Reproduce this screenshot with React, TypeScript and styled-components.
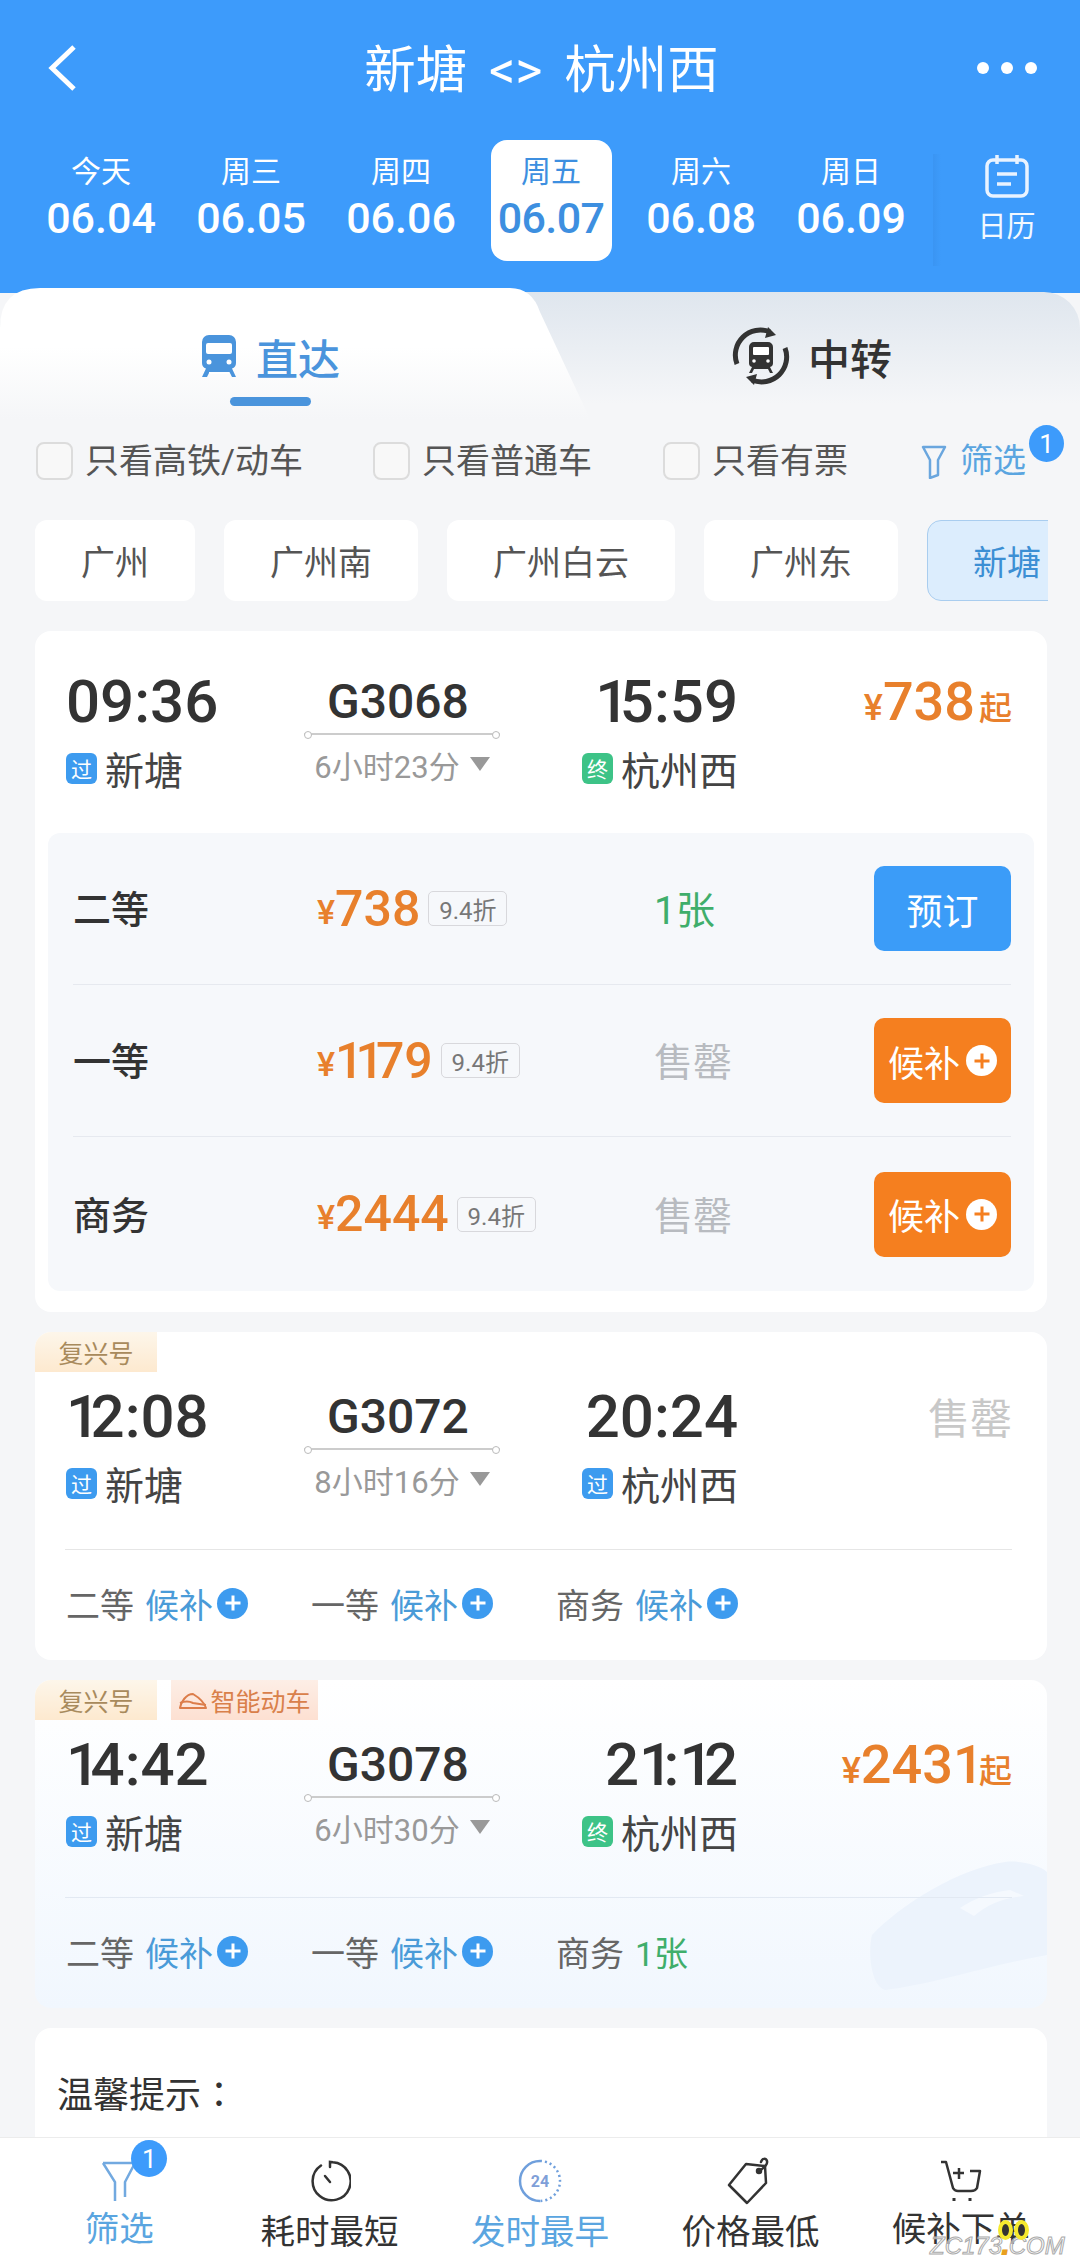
import styled, { createGlobalStyle } from 'styled-components';

const dates = [
   { day: '今天', date: '06.04' },
   { day: '周三', date: '06.05' },
   { day: '周四', date: '06.06' },
   { day: '周五', date: '06.07', active: true },
   { day: '周六', date: '06.08' },
   { day: '周日', date: '06.09' },
];

const stations = ['广州', '广州南', '广州白云', '广州东'];

const fares = [
   { name: '二等', price: '738', status: '1张', action: 'book' },
   { name: '一等', price: '1179', status: '售罄', action: 'wait' },
   { name: '商务', price: '2444', status: '售罄', action: 'wait' },
];

const TrainFront = () => (
   <svg width="38" height="44" viewBox="0 0 38 44" fill="#4a94dc">
      <path d="M9 1h20a7 7 0 0 1 7 7v21a6 6 0 0 1-4 5.600L36 43h-4l-2.500-5h-20L7 43H2l4-8.400A6 6 0 0 1 2 29V8a7 7 0 0 1 7-7Z" />
      <rect x="6" y="9" width="26" height="11" rx="2" fill="#fff" />
      <circle cx="9" cy="28" r="2.500" fill="#fff" />
      <circle cx="29" cy="28" r="2.500" fill="#fff" />
      <rect x="9" y="38" width="20" height="2" fill="#fff" />
   </svg>
);

const TransferIcon = () => (
   <svg width="58" height="58" viewBox="0 0 58 58" fill="none">
      <path d="M5 37A25 25 0 0 1 38 5" stroke="#333" strokeWidth="5" />
      <path d="M53 21a25 25 0 0 1-33 32" stroke="#333" strokeWidth="5" />
      <path d="M36 0l8 8-11 3ZM22 58l-8-8 11-3Z" fill="#333" />
      <path d="M22 15h14a5 5 0 0 1 5 5v16a4 4 0 0 1-3 4l3 6h-3l-2-4H22l-2 4h-3l3-6a4 4 0 0 1-3-4V20a5 5 0 0 1 5-5Z" fill="#333" />
      <rect x="21" y="20" width="16" height="8" rx="1" fill="#fff" />
      <circle cx="22" cy="34" r="1.800" fill="#fff" />
      <circle cx="36" cy="34" r="1.800" fill="#fff" />
   </svg>
);

const FunnelSmall = () => (
   <svg width="26" height="36" viewBox="0 0 26 36" fill="none" stroke="#6aa6de" strokeWidth="2.500">
      <path d="M2 4h22l-7 13v15l-8 3V17Z" strokeLinejoin="round" />
   </svg>
);

const SmartTrain = () => (
   <svg width="30" height="20" viewBox="0 0 30 20" fill="none" stroke="#dc7d4a" strokeWidth="2">
      <path d="M2 18c1-6 6-14 13-14 5 3 11 8 13 14Z" strokeLinejoin="round" />
      <path d="M2 13c5-2 9-2 13 0l13 2" />
   </svg>
);

const FunnelTab = () => (
   <svg width="36" height="42" viewBox="0 0 36 42" fill="none" stroke="#72a9e0" strokeWidth="2.500">
      <path d="M2 3h32" />
      <path d="M2 3l12 19v19M34 3L24 22v15" />
   </svg>
);

const ClockTab = () => (
   <svg width="42" height="42" viewBox="0 0 42 42" fill="none" stroke="#333" strokeWidth="2.500">
      <path d="M12 5.500A19 19 0 1 0 24 2.300L21 2v5" strokeLinecap="round" />
      <path d="M16 16l5 6" strokeLinecap="round" />
   </svg>
);

const EarlyTab = () => (
   <svg width="44" height="44" viewBox="0 0 44 44" fill="none">
      <path d="M22 2a20 20 0 0 0 0 40" stroke="#6f9fdc" strokeWidth="2.500" />
      <path d="M22 2a20 20 0 0 1 0 40" stroke="#6f9fdc" strokeWidth="2.500" strokeDasharray="2 3" />
      <text x="22" y="28" textAnchor="middle" fontSize="16" fontWeight="700" fontFamily="Roboto, sans-serif" fill="#7f9fd8">
         24
      </text>
   </svg>
);

const TagTab = () => (
   <svg width="48" height="48" viewBox="0 0 48 48" fill="none" stroke="#333" strokeWidth="2.500" strokeLinejoin="round">
      <path d="M20 7l19 2 1 17-19 20L3 28Z" />
      <circle cx="33" cy="14" r="2" />
      <path d="M33 14c5-3 9-6 8-10-1-3-5-3-6 1" strokeLinecap="round" />
   </svg>
);

const CartTab = () => (
   <svg width="44" height="42" viewBox="0 0 44 42" fill="none" stroke="#333" strokeWidth="2.500">
      <path d="M2 2h5l7 26c1 2 2 3 5 3h13c3 0 5-1 6-3l3-17H31" strokeLinejoin="round" />
      <path d="M20 8v11M14 13h11" />
      <path d="M15 38v3M31 38v3" strokeWidth="3" />
   </svg>
);

const Watermark = () => (
   <svg width="177" height="130" viewBox="0 0 177 130" fill="#ecf3fc">
      <path d="M2 75C30 45 90 8 135 2c15-2 35 3 42 10v83c-57 10-117 30-162 35C0 125-2 90 2 75Z" />
      <path d="M90 48c15-10 32-16 50-18l14 6c-20 2-36 8-50 20Z" fill="#f5f9fe" />
   </svg>
);

// the screenshot's digits are proportional, so a 1 takes less room than the others
const Num = ({ v }: { v: string }) => (
   <>{v.split('').map((c, i) => (c === '1' ? <One key={i}>1</One> : c))}</>
);

const Summary = ({ from, fromType, to, toType, code, duration, depart, arrive, right }: any) => (
   <TopGrid>
      <Column>
         <Time>
            <Num v={depart} />
         </Time>
         <StationLine>
            <StopBadge $end={fromType === '终'}>{fromType}</StopBadge>
            {from}
         </StationLine>
      </Column>
      <MiddleColumn>
         <TrainCode>{code}</TrainCode>
         <TrackLine />
         <Duration>
            {duration}
            <Caret />
         </Duration>
      </MiddleColumn>
      <ArriveColumn>
         <Time>
            <Num v={arrive} />
         </Time>
         <StationLine>
            <StopBadge $end={toType === '终'}>{toType}</StopBadge>
            {to}
         </StationLine>
      </ArriveColumn>
      <PriceColumn>{right}</PriceColumn>
   </TopGrid>
);

const FromPrice = ({ value }: { value: string }) => (
   <PriceLine>
      <Yen>¥</Yen>
      <BigPrice>
         <Num v={value} />
      </BigPrice>
      <Qi>起</Qi>
   </PriceLine>
);

const App = () => (
   <Page>
      <GlobalStyle />
      <Header>
         <TitleBar>
            <svg width="32" height="46" viewBox="0 0 32 46" fill="none" stroke="#fff" strokeWidth="5">
               <path d="M28 2L6 23l22 21" />
            </svg>
            <Title>
               新塘 <TitleArrow>&lt;&gt;</TitleArrow> 杭州西
            </Title>
            <Dots>
               <i />
               <i />
               <i />
            </Dots>
         </TitleBar>
         <DateRow>
            <DateList>
               {dates.map((d) => (
                  <DateItem key={d.date} $active={d.active}>
                     <WeekDay>{d.day}</WeekDay>
                     <DayNumber $active={d.active}>{d.date}</DayNumber>
                  </DateItem>
               ))}
            </DateList>
            <CalendarButton>
               <svg width="46" height="44" viewBox="0 0 46 44" fill="none" stroke="#e9f3ff" strokeWidth="3.500">
                  <rect x="3" y="6" width="40" height="36" rx="6" />
                  <path d="M13 1v9M33 1v9M13 20h20M13 30h14" />
               </svg>
               <CalendarLabel>日历</CalendarLabel>
            </CalendarButton>
         </DateRow>
      </Header>

      <TabBar>
         <DirectTab>
            <TabLabel $active>
               <TrainFront />
               直达
            </TabLabel>
            <TabMark />
         </DirectTab>
         <TransferTab>
            <TabLabel>
               <TransferIcon />
               中转
            </TabLabel>
         </TransferTab>
      </TabBar>

      <FilterRow>
         <CheckItem>
            <CheckBox />
            只看高铁/动车
         </CheckItem>
         <CheckItem>
            <CheckBox />
            只看普通车
         </CheckItem>
         <CheckItem>
            <CheckBox />
            只看有票
         </CheckItem>
         <FilterLink>
            <FunnelSmall />
            筛选
            <CountBadge>1</CountBadge>
         </FilterLink>
      </FilterRow>

      <StationRow>
         {stations.map((s) => (
            <StationChip key={s}>{s}</StationChip>
         ))}
         <ActiveChip>新塘</ActiveChip>
      </StationRow>

      <CardList>
         <Card $plain>
            <Summary
               depart="09:36"
               arrive="15:59"
               code="G3068"
               duration="6小时23分"
               from="新塘"
               fromType="过"
               to="杭州西"
               toType="终"
               right={<FromPrice value="738" />}
            />
            <FarePanel>
               {fares.map((f) => (
                  <FareRow key={f.name}>
                     <FareName>{f.name}</FareName>
                     <FarePrice>
                        <FareYen>¥</FareYen>
                        <FareValue>
                           <Num v={f.price} />
                        </FareValue>
                        <Discount>9.4折</Discount>
                     </FarePrice>
                     <FareStatus $available={f.action === 'book'}>{f.status}</FareStatus>
                     <ActionButton $wait={f.action === 'wait'}>
                        {f.action === 'book' ? (
                           '预订'
                        ) : (
                           <>
                              候补
                              <PlusDot $inverse />
                           </>
                        )}
                     </ActionButton>
                  </FareRow>
               ))}
            </FarePanel>
         </Card>

         <Card>
            <TagRow>
               <BrandTag>复兴号</BrandTag>
            </TagRow>
            <Summary
               depart="12:08"
               arrive="20:24"
               code="G3072"
               duration="8小时16分"
               from="新塘"
               fromType="过"
               to="杭州西"
               toType="过"
               right={<SoldOut>售罄</SoldOut>}
            />
            <SeatRow>
               <SeatItem>
                  二等<WaitText>候补</WaitText>
                  <PlusDot />
               </SeatItem>
               <SeatItem>
                  一等<WaitText>候补</WaitText>
                  <PlusDot />
               </SeatItem>
               <SeatItem>
                  商务<WaitText>候补</WaitText>
                  <PlusDot />
               </SeatItem>
            </SeatRow>
         </Card>

         <Card $tinted>
            <TrainMark>
               <Watermark />
            </TrainMark>
            <TagRow>
               <BrandTag>复兴号</BrandTag>
               <SmartTag>
                  <SmartTrain />
                  智能动车
               </SmartTag>
            </TagRow>
            <Summary
               depart="14:42"
               arrive="21:12"
               code="G3078"
               duration="6小时30分"
               from="新塘"
               fromType="过"
               to="杭州西"
               toType="终"
               right={<FromPrice value="2431" />}
            />
            <SeatRow $tinted>
               <SeatItem>
                  二等<WaitText>候补</WaitText>
                  <PlusDot />
               </SeatItem>
               <SeatItem>
                  一等<WaitText>候补</WaitText>
                  <PlusDot />
               </SeatItem>
               <SeatItem>
                  商务<LeftText>1张</LeftText>
               </SeatItem>
            </SeatRow>
         </Card>

         <NoticeCard>
            温馨提示<NoticeColon>：</NoticeColon>
         </NoticeCard>
      </CardList>

      <BottomBar>
         <BottomTab $active $lift>
            <IconSlot>
               <FunnelTab />
               <BottomBadge>1</BottomBadge>
            </IconSlot>
            筛选
         </BottomTab>
         <BottomTab>
            <IconSlot>
               <ClockTab />
            </IconSlot>
            耗时最短
         </BottomTab>
         <BottomTab $active>
            <IconSlot>
               <EarlyTab />
            </IconSlot>
            发时最早
         </BottomTab>
         <BottomTab>
            <IconSlot>
               <TagTab />
            </IconSlot>
            价格最低
         </BottomTab>
         <BottomTab $lift>
            <IconSlot>
               <CartTab />
            </IconSlot>
            候补下单
         </BottomTab>
      </BottomBar>
      <SiteMark>
         <Eyes>
            <i />
            <i />
         </Eyes>
         ZC173<b>.</b>COM
      </SiteMark>
   </Page>
);

export default App;

const GlobalStyle = createGlobalStyle`
   html, body {
      margin: 0;
      padding: 0;
      background: #f5f6f8;
   }
   * {
      box-sizing: border-box;
   }
`;

const Page = styled.div`
   position: relative;
   width: 1080px;
   height: 2268px;
   overflow: hidden;
   background: #f5f6f8;
   font-family: Roboto, 'Noto Sans CJK SC', sans-serif;
   color: #333;
`;

const One = styled.span`
   letter-spacing: -0.16em;
`;

const Header = styled.div`
   height: 293px;
   background: #3d9bfb;
   color: #fff;
`;

const TitleBar = styled.div`
   display: grid;
   grid-template-columns: 1fr auto 1fr;
   align-items: center;
   height: 136px;
   padding: 0 43px 0 46px;
`;

const Title = styled.div`
   margin-top: -6px;
   font-size: 51.500px;
`;

const TitleArrow = styled.span`
   margin: 0 9px;
   font-size: 52px;
`;

const Dots = styled.div`
   display: flex;
   gap: 12px;
   justify-self: end;

   i {
      width: 12px;
      height: 12px;
      border-radius: 50%;
      background: #fff;
   }
`;

const DateRow = styled.div`
   display: flex;
   margin-top: 4px;
   padding-left: 26px;
`;

const DateList = styled.div`
   display: grid;
   grid-template-columns: repeat(6, 150px);
   width: 907px;
   justify-items: center;
`;

const DateItem = styled.div<{ $active?: boolean }>`
   display: flex;
   flex-direction: column;
   align-items: center;
   width: 121px;
   height: 121px;
   padding-top: 12px;
   border-radius: 16px;
   background: ${({ $active }) => ($active ? '#fff' : 'transparent')};
   color: ${({ $active }) => ($active ? '#3d8fe0' : '#fff')};
`;

const WeekDay = styled.div`
   font-size: 30px;
   line-height: 40px;
`;

const DayNumber = styled.div<{ $active?: boolean }>`
   font-size: 43px;
   line-height: 52px;
   font-weight: 500;
   letter-spacing: ${({ $active }) => ($active ? '-0.6px' : '0')};
`;

const CalendarButton = styled.div`
   display: flex;
   flex-direction: column;
   align-items: center;
   width: 147px;
   height: 112px;
   margin-top: 14px;
   background: linear-gradient(90deg, rgba(40, 110, 190, 0.14), rgba(40, 110, 190, 0) 8px);
   color: #f2f8ff;
`;

const CalendarLabel = styled.div`
   font-size: 29px;
   line-height: 40px;
   margin-top: 9px;
`;

const TabBar = styled.div`
   display: grid;
   grid-template-columns: 590px 1fr;
   height: 127px;
   margin-top: -1px;
   border-radius: 36px 36px 0 0;
   background: linear-gradient(#dfe6ee, #f5f6f8 88%);
`;

const DirectTab = styled.div`
   display: flex;
   flex-direction: column;
   align-items: center;
   height: 131px;
   margin-top: -4px;
   padding: 46px 50px 0 0;
   background: linear-gradient(#fff 45%, #f5f6f8);
   clip-path: path('M0 131 V40 Q0 0 40 0 H510 Q532 0 540 24 L590 131 Z');
`;

const TransferTab = styled.div`
   display: flex;
   justify-content: center;
   padding: 42px 46px 0 0;
`;

const TabLabel = styled.div<{ $active?: boolean }>`
   display: flex;
   align-items: center;
   gap: 18px;
   height: 44px;
   font-size: 42px;
   font-weight: 500;
   color: ${({ $active }) => ($active ? '#4a94dc' : '#333')};
`;

const TabMark = styled.div`
   width: 81px;
   height: 9px;
   margin-top: 19px;
   border-radius: 5px;
   background: #4a94dc;
`;

const FilterRow = styled.div`
   display: grid;
   grid-template-columns: 337px 290px 258px 1fr;
   height: 38px;
   margin-top: 23px;
   padding-left: 36px;
`;

const CheckItem = styled.div`
   display: flex;
   align-items: center;
   gap: 12px;
   font-size: 34px;
   line-height: 38px;
   color: #555;
`;

const CheckBox = styled.span`
   width: 37px;
   height: 38px;
   border: 2px solid #dcdcdc;
   border-radius: 8px;
   background: #f8f8f8;
`;

const FilterLink = styled.div`
   position: relative;
   display: flex;
   align-items: center;
   gap: 13px;
   font-size: 33px;
   line-height: 38px;
   color: #5aa5e0;
`;

const CountBadge = styled.span`
   position: absolute;
   left: 108px;
   top: -17px;
   display: flex;
   align-items: center;
   justify-content: center;
   width: 35px;
   height: 37px;
   border-radius: 50%;
   background: #3d9bfb;
   color: #fff;
   font-size: 26px;
`;

const StationRow = styled.div`
   display: flex;
   gap: 29px;
   width: 1048px;
   height: 81px;
   margin-top: 40px;
   padding-left: 35px;
   overflow: hidden;
`;

const StationChip = styled.div`
   display: flex;
   flex: none;
   align-items: center;
   justify-content: center;
   padding: 0 46px;
   border-radius: 12px;
   background: #fff;
   font-size: 34px;
   white-space: nowrap;
   color: #555;
`;

const ActiveChip = styled.div`
   display: flex;
   align-items: center;
   flex: none;
   width: 140px;
   padding-left: 45px;
   border: 1px solid #a9cdef;
   border-radius: 14px;
   background: #dcedfd;
   font-size: 34px;
   white-space: nowrap;
   color: #3c8fd4;
`;

const CardList = styled.div`
   display: flex;
   flex-direction: column;
   gap: 20px;
   margin-top: 30px;
   padding: 0 33px 0 35px;
`;

const Card = styled.div<{ $plain?: boolean; $tinted?: boolean }>`
   position: relative;
   overflow: hidden;
   padding-top: ${({ $plain }) => ($plain ? '41px' : '0')};
   padding-bottom: ${({ $plain }) => ($plain ? '21px' : '0')};
   border-radius: 16px;
   background: ${({ $tinted }) => ($tinted ? 'linear-gradient(#fff, #f1f7fe)' : '#fff')};
`;

const TrainMark = styled.div`
   position: absolute;
   right: 0;
   bottom: 18px;
   line-height: 0;
`;

const TagRow = styled.div`
   display: flex;
   gap: 14px;
   height: 40px;
   margin-bottom: 15px;
`;

const BrandTag = styled.div`
   display: flex;
   align-items: center;
   justify-content: center;
   width: 122px;
   background: linear-gradient(#fdf6ea, #fde9cf);
   font-size: 25px;
   color: #a88a5c;
`;

const SmartTag = styled.div`
   display: flex;
   align-items: center;
   justify-content: center;
   gap: 2px;
   width: 147px;
   background: linear-gradient(#fdeee6, #fde0d2);
   font-size: 25px;
   color: #d9804a;
`;

const TopGrid = styled.div`
   position: relative;
   display: grid;
   grid-template-columns: 238px 196px 238px 1fr;
   padding: 0 35px 0 31px;
`;

const Column = styled.div`
   display: flex;
   flex-direction: column;
`;

const ArriveColumn = styled(Column)`
   align-items: flex-end;
`;

const MiddleColumn = styled(Column)`
   align-items: center;
`;

const PriceColumn = styled(Column)`
   align-items: flex-end;
`;

const Time = styled.div`
   font-size: 60px;
   line-height: 60px;
   font-weight: 500;
   color: #333;
`;

const StationLine = styled.div`
   display: flex;
   align-items: center;
   gap: 8px;
   height: 48px;
   margin-top: 12px;
   font-size: 39px;
   color: #444;
`;

const StopBadge = styled.span<{ $end?: boolean }>`
   display: flex;
   align-items: center;
   justify-content: center;
   width: 31px;
   height: 31px;
   border-radius: 6px;
   background: ${({ $end }) => ($end ? '#3dc387' : '#3d9bef')};
   color: #fff;
   font-size: 21px;
`;

const TrainCode = styled.div`
   margin-right: 8px;
   font-size: 48px;
   line-height: 60px;
   font-weight: 500;
   color: #333;
`;

const TrackLine = styled.div`
   position: relative;
   width: 196px;
   height: 2px;
   margin-top: 1px;
   background: #ccc;

   &::before,
   &::after {
      content: '';
      position: absolute;
      top: -2px;
      width: 6px;
      height: 6px;
      border: 1px solid #bbb;
      border-radius: 50%;
      background: #fff;
   }

   &::before {
      left: 0;
   }

   &::after {
      right: 0;
   }
`;

const Duration = styled.div`
   display: flex;
   align-items: center;
   gap: 10px;
   height: 40px;
   margin-top: 9px;
   font-size: 31px;
   color: #999;
`;

const Caret = styled.span`
   border-left: 10px solid transparent;
   border-right: 10px solid transparent;
   border-top: 14px solid #999;
`;

const PriceLine = styled.div`
   display: flex;
   align-items: baseline;
   height: 60px;
   line-height: 60px;
   color: #e8802c;
`;

const Yen = styled.span`
   font-size: 36px;
   font-weight: 500;
`;

const BigPrice = styled.span`
   font-size: 54px;
   font-weight: 500;
`;

const Qi = styled.span`
   margin-left: 4px;
   font-size: 33px;
   font-weight: 500;
`;

const SoldOut = styled.div`
   font-size: 42px;
   line-height: 66px;
   color: #c8c8c8;
`;

const FarePanel = styled.div`
   margin: 41px 13px 0;
   padding: 0 23px 0 25px;
   border-radius: 12px;
   background: #f6f8fb;
`;

const FareRow = styled.div`
   display: grid;
   grid-template-columns: 244px 337px 220px 137px;
   align-items: center;
   height: 152px;
   border-bottom: 1px solid #e6e9ef;

   &:last-child {
      height: 154px;
      border-bottom: none;
   }
`;

const FareName = styled.div`
   margin-top: -4px;
   font-size: 38px;
   font-weight: 500;
   color: #333;
`;

const FarePrice = styled.div`
   display: flex;
   align-items: center;
   color: #e8802c;
`;

const FareYen = styled.span`
   margin-top: 6px;
   font-size: 34px;
   font-weight: 500;
`;

const FareValue = styled.span`
   font-size: 50px;
   font-weight: 500;
`;

const Discount = styled.span`
   display: flex;
   align-items: center;
   justify-content: center;
   width: 79px;
   height: 35px;
   margin-left: 8px;
   border: 1px solid #d8d8dc;
   border-radius: 5px;
   font-size: 24px;
   color: #777;
`;

const FareStatus = styled.div<{ $available?: boolean }>`
   margin-top: -3px;
   font-size: 39px;
   color: ${({ $available }) => ($available ? '#3fae6b' : '#b8bbc0')};
`;

const ActionButton = styled.div<{ $wait?: boolean }>`
   display: flex;
   align-items: center;
   justify-content: center;
   gap: 6px;
   height: 85px;
   border-radius: 10px;
   background: ${({ $wait }) => ($wait ? '#f57f1f' : '#3b9cf8')};
   color: #fff;
   font-size: 36px;
`;

const PlusDot = styled.span<{ $inverse?: boolean }>`
   position: relative;
   flex: none;
   width: 31px;
   height: 31px;
   border-radius: 50%;
   background: ${({ $inverse }) => ($inverse ? '#fff' : '#3d9bef')};

   &::before,
   &::after {
      content: '';
      position: absolute;
      left: 50%;
      top: 50%;
      background: ${({ $inverse }) => ($inverse ? '#f57f1f' : '#fff')};
      transform: translate(-50%, -50%);
   }

   &::before {
      width: 15px;
      height: 3px;
   }

   &::after {
      width: 3px;
      height: 15px;
   }
`;

const SeatRow = styled.div<{ $tinted?: boolean }>`
   position: relative;
   display: grid;
   grid-template-columns: repeat(3, 245px);
   align-items: center;
   height: 111px;
   margin: 42px 35px 0 30px;
   padding-left: 1px;
   border-top: 1px solid ${({ $tinted }) => ($tinted ? '#e2e9f2' : '#e6e6e6')};
`;

const SeatItem = styled.div`
   display: flex;
   align-items: center;
   padding-bottom: 4px;
   font-size: 34px;
   color: #666;
`;

const WaitText = styled.span`
   margin: 0 4px 0 11px;
   color: #4a9bd8;
`;

const LeftText = styled.span`
   margin-left: 11px;
   color: #3fae6b;
`;

const NoticeCard = styled.div`
   height: 220px;
   padding: 42px 0 0 22px;
   border-radius: 16px;
   background: #fff;
   font-size: 36px;
   line-height: 44px;
   color: #333;
`;

const NoticeColon = styled.span`
   font-family: 'Noto Sans CJK TC', sans-serif;
`;

const BottomBar = styled.div`
   position: absolute;
   left: 0;
   right: 0;
   bottom: 0;
   display: grid;
   grid-template-columns: repeat(5, 1fr);
   height: 131px;
   padding: 0 14px;
   border-top: 1px solid #ececec;
   background: #fff;
`;

const BottomTab = styled.div<{ $active?: boolean; $lift?: boolean }>`
   display: flex;
   flex-direction: column;
   align-items: center;
   padding-top: 20px;
   font-size: 34.500px;
   line-height: 34px;
   color: ${({ $active }) => ($active ? '#5aa5e0' : '#333')};
   gap: ${({ $lift }) => ($lift ? '8px' : '11px')};
`;

const IconSlot = styled.div`
   position: relative;
   display: flex;
   align-items: center;
   justify-content: center;
   height: 46px;
`;

const BottomBadge = styled.span`
   position: absolute;
   left: 30px;
   top: -18px;
   display: flex;
   align-items: center;
   justify-content: center;
   width: 36px;
   height: 37px;
   border-radius: 50%;
   background: #3d9bfb;
   color: #fff;
   font-size: 26px;
`;

const SiteMark = styled.div`
   position: absolute;
   left: 930px;
   top: 2236px;
   font-family: 'Liberation Sans', sans-serif;
   font-size: 24px;
   line-height: 20px;
   font-style: italic;
   color: rgba(255, 255, 255, 0.6);
   -webkit-text-stroke: 1px #aaa;

   b {
      color: #e8a020;
      -webkit-text-stroke: 2px #e8a020;
   }
`;

const Eyes = styled.div`
   position: absolute;
   left: 68px;
   top: -16px;
   display: flex;
   gap: 1px;

   i {
      width: 15px;
      height: 20px;
      border-radius: 50%;
      border: 4px solid #f5e92e;
      background: #333;
   }
`;
